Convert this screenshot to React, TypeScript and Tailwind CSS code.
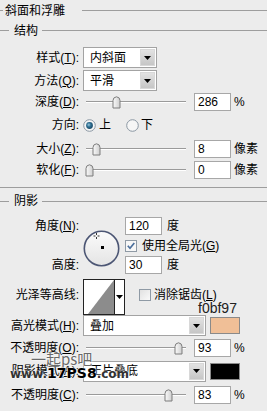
import React from "react";

const LINE = "h-px bg-[#9d9d9d]";

function Arrow() {
  return (
    <svg width="7" height="4" viewBox="0 0 7 4">
      <path d="M0 0 H7 L3.5 4 Z" fill="#000" />
    </svg>
  );
}

function Select({ w, text }: { w: string; text: string }) {
  return (
    <div className={`flex h-[21px] border border-[#a3a3a3] bg-white ${w}`}>
      <div className="flex-1 flex items-center pl-[6px] whitespace-nowrap overflow-hidden">{text}</div>
      <div className="w-[15px] m-[1px] flex items-center justify-center bg-linear-to-b from-[#e2e2e2] to-[#c6c6c6] border border-[#d8d8d8]">
        <Arrow />
      </div>
    </div>
  );
}

function Input({ value }: { value: string }) {
  return (
    <div className="w-[37px] h-[18px] border border-[#a7a7a7] bg-white pl-[3px] flex items-center">{value}</div>
  );
}

function Thumb() {
  return (
    <svg width="9" height="13" viewBox="0 0 9 13">
      <defs>
        <linearGradient id="tg" x1="0" y1="0" x2="1" y2="0">
          <stop offset="0" stopColor="#fafafa" />
          <stop offset="1" stopColor="#cfcfcf" />
        </linearGradient>
      </defs>
      <path d="M1 12 V4.5 Q1 1.2 4.5 0.8 Q8 1.2 8 4.5 V12 Z" fill="url(#tg)" stroke="#7c7c7c" strokeWidth="1" />
    </svg>
  );
}

function Slider({ pos }: { pos: number }) {
  return (
    <div className="relative ml-[3px] w-[100px] h-[14px]">
      <div className="absolute left-0 right-0 top-[6px] h-px bg-[#9a9a9a]" />
      <div className="absolute left-0 right-0 top-[7px] h-px bg-white" />
      <div className="absolute top-[1px] flex" style={{ left: pos }}>
        <Thumb />
      </div>
    </div>
  );
}

function Label({ children }: { children: React.ReactNode }) {
  return <div className="w-[79px] shrink-0 text-right whitespace-nowrap">{children}</div>;
}

function Row({ h, label, children }: { h: string; label: React.ReactNode; children?: React.ReactNode }) {
  return (
    <div className={`flex items-center ${h}`}>
      <Label>{label}</Label>
      <div className="ml-[4px] flex items-center">{children}</div>
    </div>
  );
}

function SliderRow({ h, label, pos, value, unit }: { h: string; label: React.ReactNode; pos: number; value: string; unit: string }) {
  return (
    <Row h={h} label={label}>
      <Slider pos={pos} />
      <div className="ml-[8px]">
        <Input value={value} />
      </div>
      <span className="ml-[3px]">{unit}</span>
    </Row>
  );
}

function Radio({ on }: { on: boolean }) {
  return (
    <svg width="13" height="13" viewBox="0 0 13 13">
      <defs>
        <radialGradient id="rg" cx="0.4" cy="0.4" r="0.6">
          <stop offset="0" stopColor="#9ccbe0" />
          <stop offset="0.5" stopColor="#2f6f92" />
          <stop offset="1" stopColor="#1d4c6a" />
        </radialGradient>
      </defs>
      <circle cx="6.5" cy="6.5" r="5.8" fill="#f6f6f6" stroke="#8b97a3" strokeWidth="1" />
      {on && <circle cx="6.5" cy="6.5" r="3.4" fill="url(#rg)" />}
    </svg>
  );
}

function Check({ on }: { on: boolean }) {
  return (
    <svg width="12" height="12" viewBox="0 0 12 12">
      <defs>
        <linearGradient id="cg" x1="0" y1="0" x2="1" y2="1">
          <stop offset="0" stopColor="#e0e0e0" />
          <stop offset="1" stopColor="#fbfbfb" />
        </linearGradient>
      </defs>
      <rect x="0.5" y="0.5" width="11" height="11" fill={on ? "#f7f7f7" : "url(#cg)"} stroke="#8f9aa5" />
      {on && <path d="M2.8 5.8 L5 8.3 L9.3 3" fill="none" stroke="#4a6e9c" strokeWidth="1.7" />}
    </svg>
  );
}

function AngleDial() {
  return (
    <svg width="37" height="37" viewBox="0 0 37 37">
      <defs>
        <linearGradient id="dg" x1="0" y1="0" x2="0" y2="1">
          <stop offset="0" stopColor="#fbfbfb" />
          <stop offset="1" stopColor="#e4e4e4" />
        </linearGradient>
      </defs>
      <circle cx="18.5" cy="18.5" r="17.2" fill="url(#dg)" stroke="#4c5674" strokeWidth="1.6" />
      <g stroke="#333" strokeWidth="1">
        <line x1="13.5" y1="3" x2="13.5" y2="5" />
        <line x1="13.5" y1="7" x2="13.5" y2="9" />
        <line x1="10.5" y1="6" x2="12.5" y2="6" />
        <line x1="14.5" y1="6" x2="16.5" y2="6" />
      </g>
      <rect x="18" y="16" width="3" height="3" fill="#000" />
    </svg>
  );
}

function Contour() {
  return (
    <div className="flex w-[42px] h-[36px] border border-[#222] bg-white">
      <svg width="30" height="34" viewBox="0 0 30 34" className="shrink-0">
        <polygon points="4,34 30,0 30,34" fill="#8c8c8c" />
      </svg>
      <div className="w-px bg-[#222]" />
      <div className="flex-1 flex items-center justify-center">
        <Arrow />
      </div>
    </div>
  );
}

export default function App() {
  return (
    <div className="relative w-[267px] h-[411px] overflow-hidden bg-[#ececec] text-[12px] leading-[16px] text-black font-['Liberation_Sans','Noto_Sans_CJK_SC',sans-serif]">
      <div className="flex items-center h-[21px]">
        <div className={`w-[3px] ${LINE}`} />
        <span className="ml-[2px]">斜面和浮雕</span>
        <div className={`ml-[17px] flex-1 ${LINE}`} />
      </div>
      <div className="flex items-center h-[19px]">
        <div className={`w-[9px] ${LINE}`} />
        <span className="ml-[5px]">结构</span>
        <div className={`ml-[4px] flex-1 ${LINE}`} />
      </div>
      <div className="h-[6px]" />
      <Row h="h-[23px]" label={<>样式(<u>T</u>):</>}>
        <Select w="w-[74px]" text="内斜面" />
      </Row>
      <Row h="h-[23px]" label={<>方法(<u>Q</u>):</>}>
        <Select w="w-[74px]" text="平滑" />
      </Row>
      <SliderRow h="h-[20px]" label={<>深度(<u>D</u>):</>} pos={26} value="286" unit="%" />
      <Row h="h-[26px]" label="方向:">
        <Radio on />
        <span className="ml-[3px]">上</span>
        <span className="ml-[15px] flex"><Radio on={false} /></span>
        <span className="ml-[2px]">下</span>
      </Row>
      <SliderRow h="h-[21px]" label={<>大小(<u>Z</u>):</>} pos={6} value="8" unit="像素" />
      <SliderRow h="h-[22px]" label={<>软化(<u>F</u>):</>} pos={-1} value="0" unit="像素" />
      <div className="h-[6px]" />
      <div className={`w-full ${LINE}`} />
      <div className="flex items-center h-[26px]">
        <div className={`w-[9px] ${LINE}`} />
        <span className="ml-[5px]">阴影</span>
        <div className={`ml-[4px] flex-1 ${LINE}`} />
      </div>
      <div className="grid grid-cols-[79px_46px_1fr] grid-rows-[24px_15px_23px]">
        <div className="col-start-1 row-start-1 flex items-center justify-end whitespace-nowrap">角度(<u>N</u>):</div>
        <div className="col-start-2 row-start-1 row-span-3 pl-[4px] pt-[16px]">
          <AngleDial />
        </div>
        <div className="col-start-3 row-start-1 flex items-center">
          <Input value="120" />
          <span className="ml-[5px]">度</span>
        </div>
        <div className="col-start-3 row-start-2 flex items-center">
          <Check on />
          <span className="ml-[5px] whitespace-nowrap">使用全局光(<u>G</u>)</span>
        </div>
        <div className="col-start-1 row-start-3 flex items-center justify-end whitespace-nowrap">高度:</div>
        <div className="col-start-3 row-start-3 flex items-center">
          <Input value="30" />
          <span className="ml-[5px]">度</span>
        </div>
      </div>
      <div className="flex h-[39px]">
        <div className="pt-[11px]">
          <Label>光泽等高线:</Label>
        </div>
        <div className="ml-[4px] pt-[3px]">
          <Contour />
        </div>
        <div className="ml-[14px] flex flex-col">
          <div className="flex items-center h-[16px] mt-[11px]">
            <Check on={false} />
            <span className="ml-[3px] whitespace-nowrap">消除锯齿(<u>L</u>)</span>
          </div>
          <div className="ml-[59px] -mt-[2px] text-[14px] leading-[14px] text-[#222]">f0bf97</div>
        </div>
      </div>
      <Row h="h-[21px]" label={<>高光模式(<u>H</u>):</>}>
        <Select w="w-[123px]" text="叠加" />
        <div className="ml-[4px] w-[30px] h-[17px] border border-[#8a8a8a] bg-[#f0bf97]" />
      </Row>
      <SliderRow h="h-[24px]" label={<>不透明度(<u>O</u>):</>} pos={88} value="93" unit="%" />
      <Row h="h-[22px]" label={<>阴影模式(<u>A</u>):</>}>
        <Select w="w-[123px]" text="正片叠底" />
        <div className="ml-[4px] w-[30px] h-[17px] border border-[#8a8a8a] bg-black" />
      </Row>
      <SliderRow h="h-[26px]" label={<>不透明度(<u>C</u>):</>} pos={78} value="83" unit="%" />

      <div className="absolute left-[31px] top-[351px] text-[15px] leading-[15px] text-[#6a6a6a] [text-shadow:0_0_2px_#fff,0_0_2px_#fff] font-['Noto_Sans_CJK_SC',sans-serif] whitespace-nowrap">
        一起ps吧
      </div>
      <div className="absolute left-[10px] top-[367px] text-[12px] leading-[12px] text-[#333] [text-shadow:0_0_2px_#fff,0_0_2px_#fff] whitespace-nowrap font-['DejaVu_Sans',sans-serif] font-bold">
        www.<span className="text-[14px] text-black">17PS8</span>.com
      </div>
    </div>
  );
}
